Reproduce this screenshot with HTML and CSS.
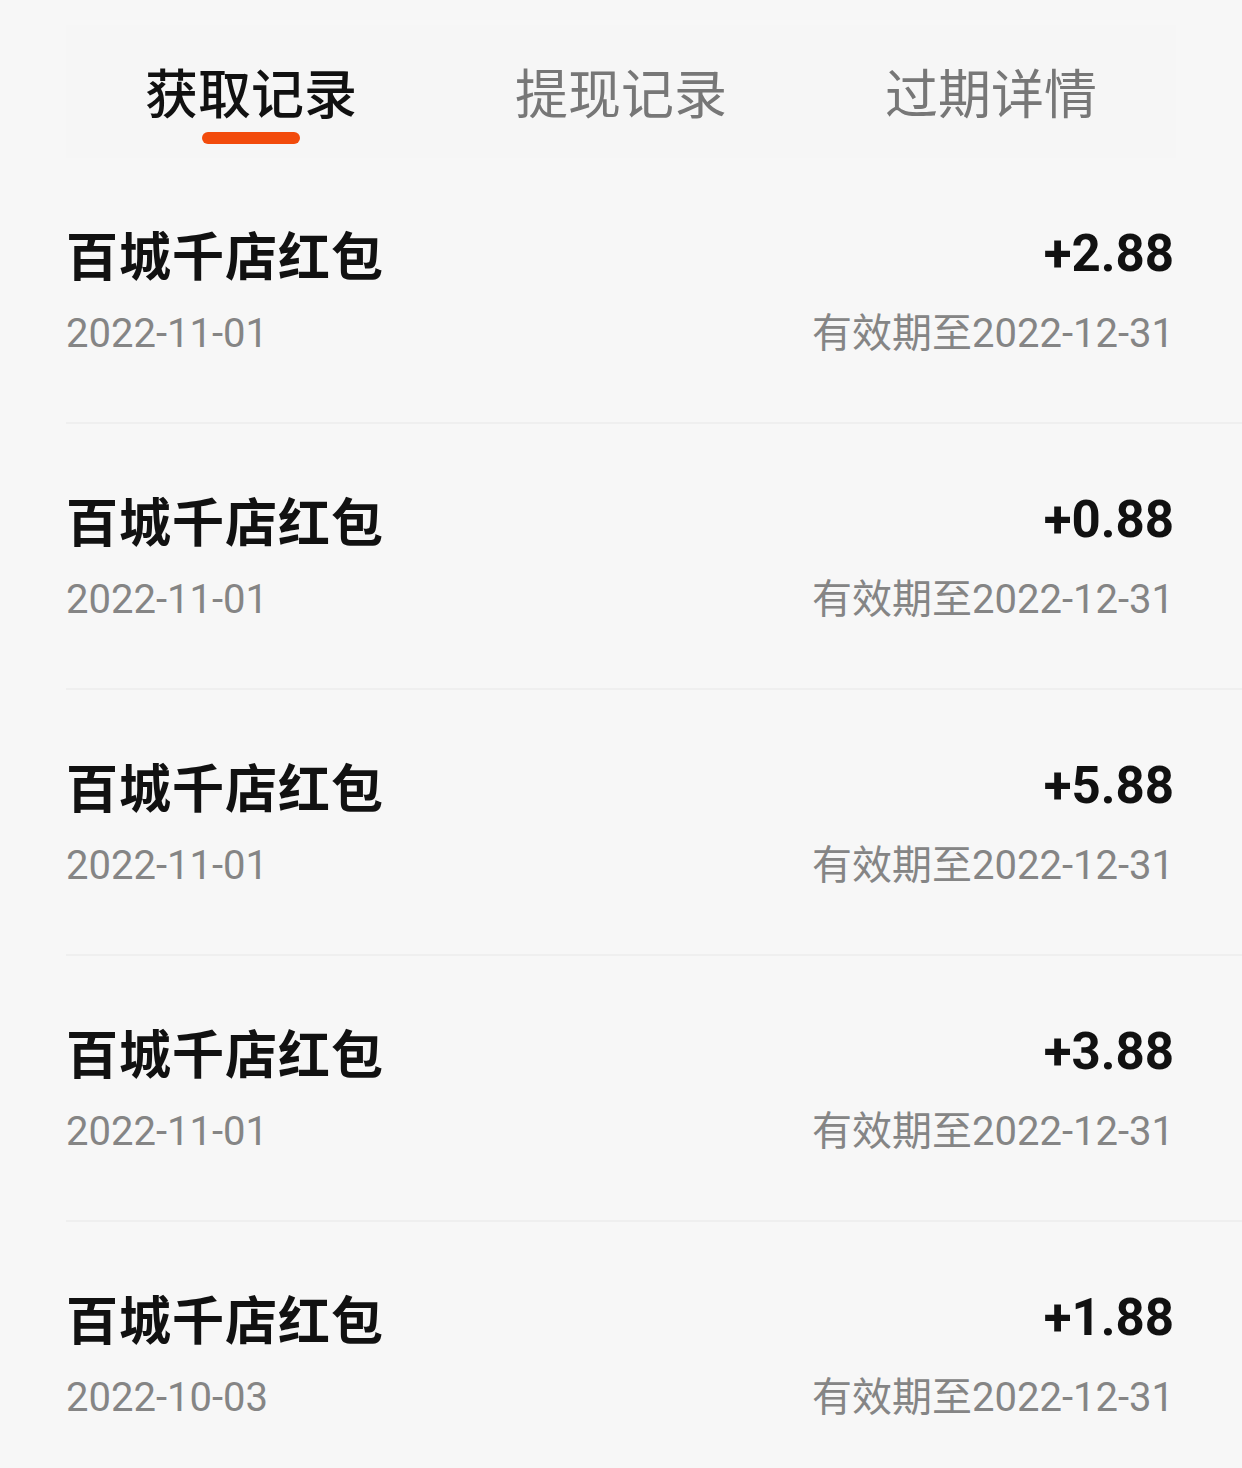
FILE: index.html
```html
<!DOCTYPE html>
<html lang="zh">
<head>
<meta charset="utf-8">
<link rel="stylesheet" href="styles.css">
</head>
<body>
<div class="page">
  <div class="tabs">
    <div class="tab active"><span>获取记录</span><i class="bar"></i></div>
    <div class="tab"><span>提现记录</span></div>
    <div class="tab"><span>过期详情</span></div>
  </div>
  <div class="list">
    <div class="row">
      <div class="line"><span class="title">百城千店红包</span><span class="amount">+2.88</span></div>
      <div class="line sub"><span>2022-11-01</span><span>有效期至2022-12-31</span></div>
    </div>
    <div class="row">
      <div class="line"><span class="title">百城千店红包</span><span class="amount">+0.88</span></div>
      <div class="line sub"><span>2022-11-01</span><span>有效期至2022-12-31</span></div>
    </div>
    <div class="row">
      <div class="line"><span class="title">百城千店红包</span><span class="amount">+5.88</span></div>
      <div class="line sub"><span>2022-11-01</span><span>有效期至2022-12-31</span></div>
    </div>
    <div class="row">
      <div class="line"><span class="title">百城千店红包</span><span class="amount">+3.88</span></div>
      <div class="line sub"><span>2022-11-01</span><span>有效期至2022-12-31</span></div>
    </div>
    <div class="row">
      <div class="line"><span class="title">百城千店红包</span><span class="amount">+1.88</span></div>
      <div class="line sub"><span>2022-10-03</span><span>有效期至2022-12-31</span></div>
    </div>
  </div>
</div>
</body>
</html>
```
FILE: styles.css
```css
html, body {
  margin: 0;
  padding: 0;
  background: #f7f7f7;
}
body {
  font-family: "Roboto", "Noto Sans CJK SC", sans-serif;
  width: 1242px;
  height: 1468px;
  overflow: hidden;
}
.page {
  padding-top: 25px;
}
.tabs {
  margin-left: 66px;
  width: 1110px;
  height: 133px;
  display: grid;
  grid-template-columns: 1fr 1fr 1fr;
  background: #f6f6f6;
}
.tab {
  position: relative;
  display: flex;
  justify-content: center;
  padding-top: 36px;
  font-family: "Noto Sans CJK SC", sans-serif;
  font-size: 53px;
  line-height: 60px;
  color: #777;
  height: 60px;
}
.tab.active {
  color: #111;
  font-weight: 500;
}
.tab .bar {
  position: absolute;
  left: 50%;
  top: 107px;
  width: 98px;
  height: 12px;
  margin-left: -49px;
  border-radius: 6px;
  background: #f24b0c;
}
.row {
  margin-left: 66px;
  padding: 66px 68px 65px 0;
  border-bottom: 2px solid #efefef;
  display: flex;
  flex-direction: column;
  gap: 27px;
}
.line {
  display: flex;
  justify-content: space-between;
  align-items: center;
}
.title {
  font-family: "Noto Sans CJK SC", sans-serif;
  font-weight: 700;
  font-size: 52px;
  letter-spacing: 1px;
  line-height: 60px;
  color: #111;
}
.amount {
  font-family: "Roboto", sans-serif;
  font-weight: 700;
  font-size: 51px;
  line-height: 60px;
  color: #111;
}
.sub {
  font-size: 40px;
  line-height: 46px;
  color: #858585;
}
```
